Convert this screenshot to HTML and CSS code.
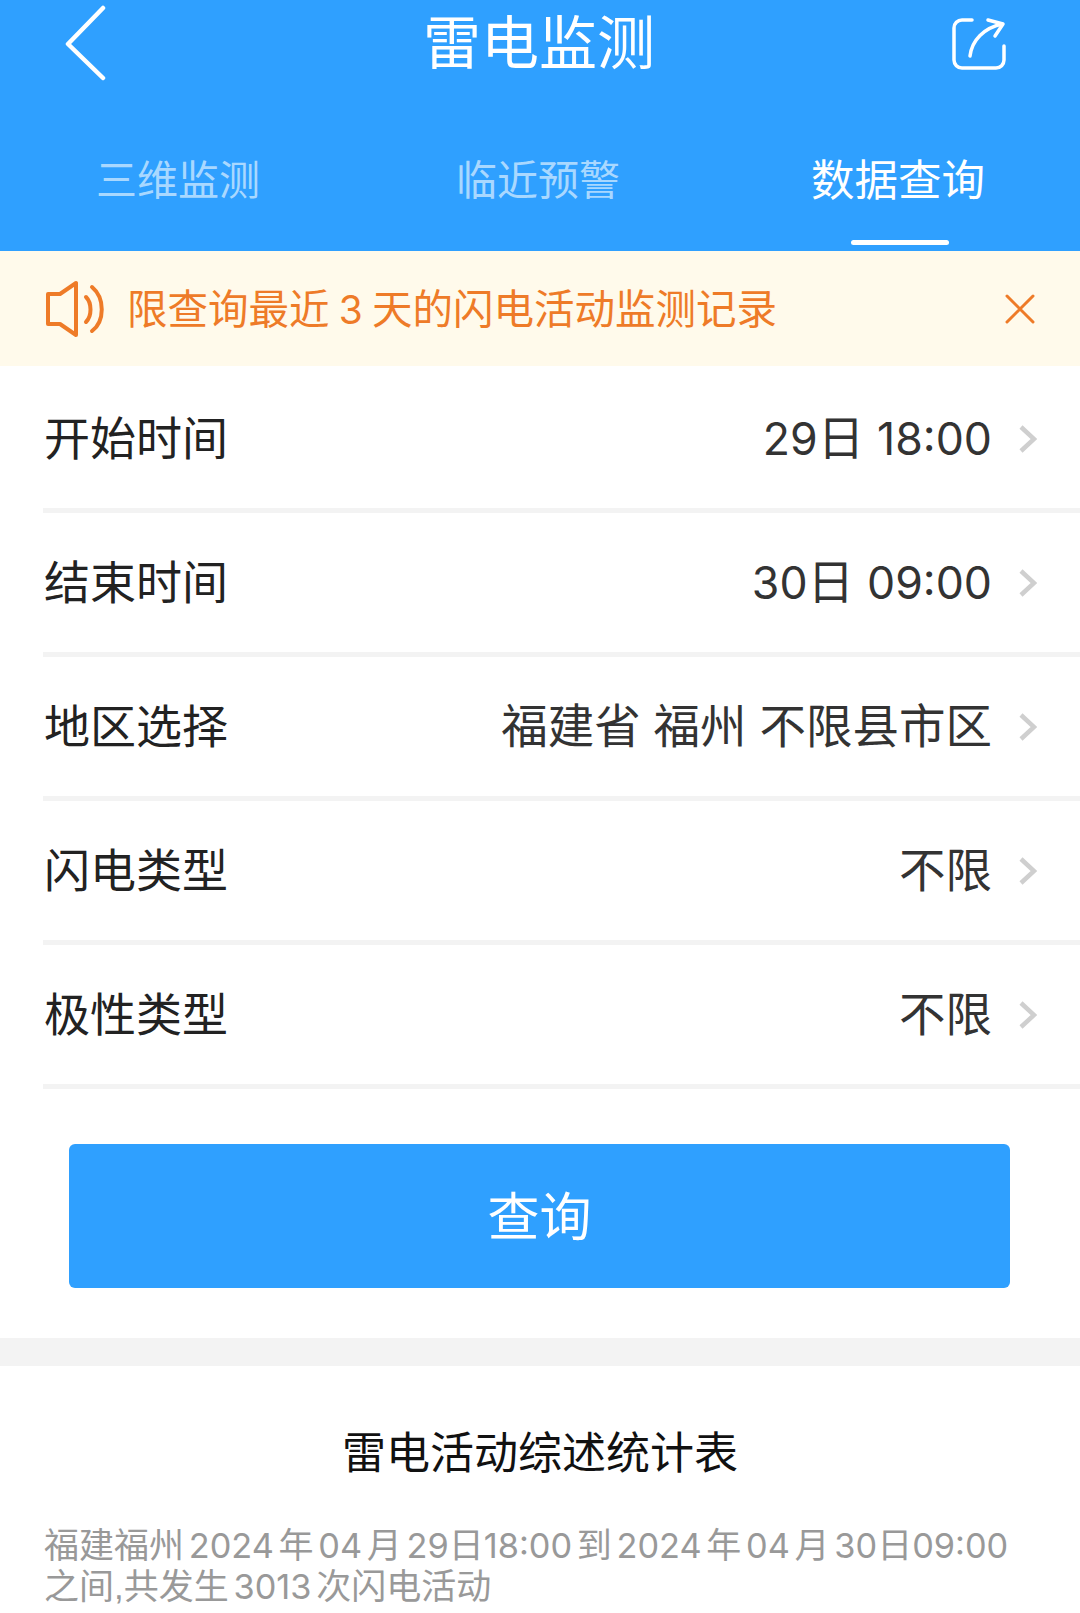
FILE: index.html
```html
<!DOCTYPE html>
<html lang="zh-CN">
<head>
    <meta charset="UTF-8">
    <meta name="viewport" content="width=device-width, initial-scale=1.0">
    <title>雷电监测</title>
    <link rel="stylesheet" href="styles.css">
</head>
<body>
    <header class="header">
        <div class="topbar">
            <div class="topbar-side">
                <svg width="44" height="78" viewBox="0 0 44 78" fill="none" stroke="#fff" stroke-width="4.5" stroke-linecap="round" stroke-linejoin="round">
                    <path d="M41 3 L6 39 L41 73"/>
                </svg>
            </div>
            <h1 class="page-title">雷电监测</h1>
            <div class="topbar-side topbar-right">
                <svg width="60" height="58" viewBox="0 0 60 58" fill="none" stroke="#fff" stroke-width="3.5" stroke-linecap="round" stroke-linejoin="round">
                    <path d="M22 5 H12 a8 8 0 0 0 -8 8 V45 a8 8 0 0 0 8 8 H46 a8 8 0 0 0 8 -8 V31"/>
                    <path d="M20 41 C22 25 34 13 52 9"/>
                    <path d="M38 5 L53 9 L45 21"/>
                </svg>
            </div>
        </div>
        <nav class="tabs">
            <div class="tab">三维监测</div>
            <div class="tab">临近预警</div>
            <div class="tab tab-active">数据查询</div>
        </nav>
    </header>

    <div class="notice">
        <svg width="62" height="58" viewBox="0 0 62 58" fill="none" stroke="#ee7b28" stroke-width="4" stroke-linecap="round" stroke-linejoin="round">
            <path d="M3 14 H15 L31 3 V55 L15 44 H3 Z"/>
            <path d="M41 17 C47 23 47 36 41 42"/>
            <path d="M47 7 C60 18 60 41 47 51"/>
        </svg>
        <span class="notice-text">限查询最近 <span class="num">3</span> 天的闪电活动监测记录</span>
        <svg width="32" height="32" viewBox="0 0 32 32" fill="none" stroke="#ee7b28" stroke-width="3" stroke-linecap="round">
            <path d="M3 3 L29 29 M29 3 L3 29"/>
        </svg>
    </div>

    <div class="form-list">
        <div class="form-row">
            <span class="form-label">开始时间</span>
            <span class="form-value"><span class="num">29</span>日 <span class="num">18:00</span></span>
            <svg class="icon-arrow" width="18" height="30" viewBox="0 0 18 30" fill="none" stroke="#cfcfcf" stroke-width="4.5"><path d="M2 3 L15 15 L2 27"/></svg>
        </div>
        <div class="form-row">
            <span class="form-label">结束时间</span>
            <span class="form-value"><span class="num">30</span>日 <span class="num">09:00</span></span>
            <svg class="icon-arrow" width="18" height="30" viewBox="0 0 18 30" fill="none" stroke="#cfcfcf" stroke-width="4.5"><path d="M2 3 L15 15 L2 27"/></svg>
        </div>
        <div class="form-row">
            <span class="form-label">地区选择</span>
            <span class="form-value">福建省 福州 不限县市区</span>
            <svg class="icon-arrow" width="18" height="30" viewBox="0 0 18 30" fill="none" stroke="#cfcfcf" stroke-width="4.5"><path d="M2 3 L15 15 L2 27"/></svg>
        </div>
        <div class="form-row">
            <span class="form-label">闪电类型</span>
            <span class="form-value">不限</span>
            <svg class="icon-arrow" width="18" height="30" viewBox="0 0 18 30" fill="none" stroke="#cfcfcf" stroke-width="4.5"><path d="M2 3 L15 15 L2 27"/></svg>
        </div>
        <div class="form-row">
            <span class="form-label">极性类型</span>
            <span class="form-value">不限</span>
            <svg class="icon-arrow" width="18" height="30" viewBox="0 0 18 30" fill="none" stroke="#cfcfcf" stroke-width="4.5"><path d="M2 3 L15 15 L2 27"/></svg>
        </div>
    </div>

    <div class="btn-wrap">
        <button class="btn-query">查询</button>
    </div>

    <div class="band"></div>

    <section class="summary">
        <h2 class="summary-title">雷电活动综述统计表</h2>
        <p class="summary-text">福建福州 <span class="num">2024</span> 年 <span class="num">04</span> 月 <span class="num">29</span>日<span class="num">18:00</span> 到 <span class="num">2024</span> 年 <span class="num">04</span> 月 <span class="num">30</span>日<span class="num">09:00</span><br>之间,共发生 <span class="num">3013</span> 次闪电活动</p>
    </section>
</body>
</html>
```

FILE: styles.css
```css
* {
    box-sizing: border-box;
}
html, body {
    height: 1613px;
    overflow: hidden;
}
body {
    font-family: "Liberation Sans", "Noto Sans CJK SC", sans-serif;
    margin: 0;
    background-color: #fff;
    color: #333;
}
.num {
    font-family: Inter, "Liberation Sans", sans-serif;
    font-size: 0.96em;
}
.header {
    height: 251px;
    background-color: #2fa0ff;
    color: #fff;
}
.topbar {
    height: 88px;
    display: flex;
    align-items: center;
    padding: 0 62px;
}
.topbar-side {
    flex: 1;
    display: flex;
}
.topbar-right {
    justify-content: flex-end;
    padding-right: 8px;
}
.page-title {
    margin: 0;
    padding-left: 6px;
    font-size: 58px;
    font-weight: 400;
    line-height: 88px;
}
.tabs {
    display: grid;
    grid-template-columns: repeat(3, 1fr);
}
.tab {
    height: 163px;
    padding: 61px 4px 0 0;
    text-align: center;
    font-size: 41px;
    line-height: 64px;
    color: #a9d8ff;
}
.tab-active {
    font-size: 43.5px;
    color: #fff;
}
.tab-active::after {
    content: "";
    display: block;
    width: 98px;
    height: 5px;
    margin: 27px 0 0 131px;
    border-radius: 3px;
    background-color: #fff;
}
.notice {
    height: 115px;
    display: flex;
    align-items: center;
    padding: 0 44px 0 45px;
    background-color: #fffaeb;
}
.notice-text {
    flex: 1;
    margin-left: 20px;
    padding-top: 2px;
    font-size: 40.5px;
    line-height: 60px;
    word-spacing: -2px;
    color: #ee7b28;
}
.form-list {
    margin-top: 3px;
    margin-left: 43px;
}
.form-row {
    height: 144px;
    display: flex;
    align-items: center;
    padding-right: 43px;
    border-bottom: 5px solid #f3f3f3;
}
.form-row:first-child {
    height: 147px;
    margin-top: -3px;
    padding-top: 3px;
}
.form-label {
    flex: 1;
    margin-left: 1px;
    padding-top: 1px;
    font-size: 46px;
    line-height: 64px;
    color: #222;
}
.form-value {
    font-size: 46.5px;
    line-height: 64px;
    color: #333;
}
.icon-arrow {
    margin-left: 27px;
}
.btn-wrap {
    padding: 55px 70px 50px 69px;
}
.btn-query {
    display: block;
    width: 100%;
    height: 144px;
    padding: 0 0 6px;
    border: none;
    border-radius: 6px;
    background-color: #2fa0ff;
    color: #fff;
    font-family: inherit;
    font-size: 52px;
}
.band {
    height: 28px;
    background-color: #f3f3f3;
}
.summary {
    padding: 0 44px;
}
.summary-title {
    margin: 57px 0 0;
    text-align: center;
    font-size: 44px;
    font-weight: 400;
    line-height: 62px;
    color: #111;
}
.summary-text {
    margin: 40px 0 0;
    font-size: 35px;
    line-height: 41px;
    word-spacing: -5px;
    color: #999;
}
.summary-text .num {
    font-size: 0.98em;
}
```
